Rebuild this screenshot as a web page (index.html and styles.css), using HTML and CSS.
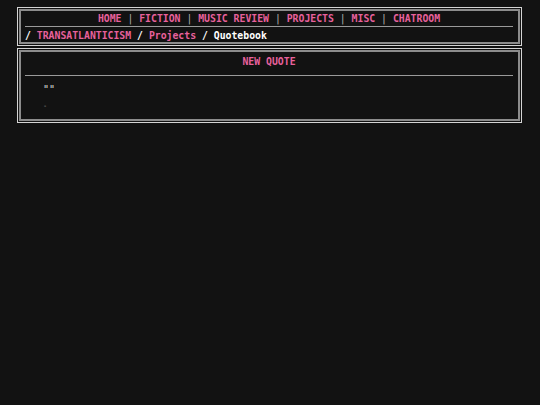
FILE: index.html
```html
<!DOCTYPE html>
<html>
<head>
<meta charset="utf-8">
<link rel="stylesheet" href="styles.css">
</head>
<body>
<div class="wrap">
  <div class="box">
    <div class="box-in head">
      <nav class="nav">
        <a href="#">HOME</a> <span class="sep">|</span> <a href="#">FICTION</a> <span class="sep">|</span> <a href="#">MUSIC REVIEW</a> <span class="sep">|</span> <a href="#">PROJECTS</a> <span class="sep">|</span> <a href="#">MISC</a> <span class="sep">|</span> <a href="#">CHATROOM</a>
      </nav>
      <hr class="rule">
      <div class="crumbs">/ <a href="#">TRANSATLANTICISM</a> / <a href="#">Projects</a> / <span class="here">Quotebook</span></div>
    </div>
  </div>
  <div class="box second">
    <div class="box-in main">
      <h1 class="title">NEW QUOTE</h1>
      <hr class="rule">
      <div class="quote">
        <p class="qtext">""</p>
        <p class="qauthor">-</p>
      </div>
    </div>
  </div>
</div>
</body>
</html>
```

FILE: styles.css
```css
html, body {
  margin: 0;
  background: #121212;
}
body {
  font-family: "DejaVu Sans Mono", "Liberation Mono", monospace;
  font-size: 9.8px;
  font-weight: bold;
  color: #f0f0f0;
}
.wrap {
  padding: 7px 18px 0 17px;
}
.box {
  border: 1px solid #d4d4d4;
  padding: 1px;
}
.box.second {
  margin-top: 2px;
}
.box-in {
  border: 2px solid #8c8c8c;
  padding: 0 5px 0 4px;
}
a {
  color: #e8619c;
  text-decoration: none;
}
.sep {
  color: #b0b0b0;
  font-weight: normal;
}
.nav {
  text-align: center;
  line-height: 12px;
  margin-top: 2px;
}
.rule {
  border: 0;
  height: 1px;
  background: #9a9a9a;
  margin: 1px 0 3px;
}
.crumbs {
  line-height: 12px;
  color: #ffffff;
}
.here {
  color: #ffffff;
}
.main {
  padding-top: 4px;
  padding-bottom: 7px;
}
.title {
  margin: 0;
  font-size: 9.8px;
  line-height: 12px;
  text-align: center;
  color: #e8619c;
}
.main .rule {
  margin: 7px 0 0;
}
.quote {
  padding-left: 18px;
  margin-top: 8px;
}
.qtext {
  margin: 0;
  line-height: 12px;
  color: #dddddd;
  font-weight: normal;
  font-size: 10px;
}
.qauthor {
  margin: 4px 0 0;
  line-height: 12px;
  font-size: 7px;
  color: #999;
  font-weight: normal;
}
```
